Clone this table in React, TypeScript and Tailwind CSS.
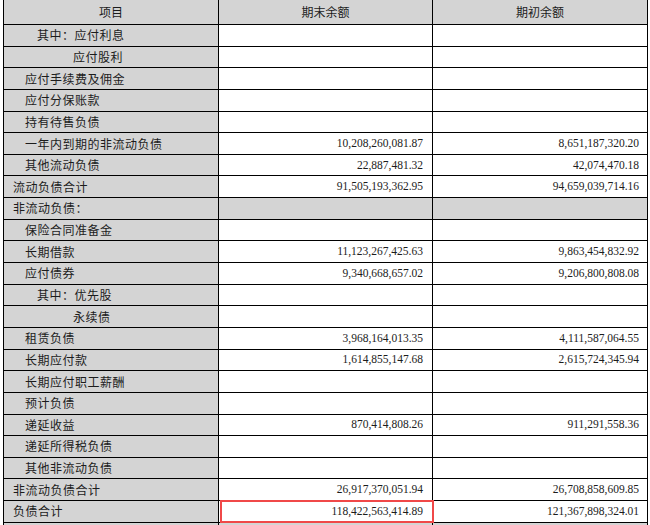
import React from 'react'

type Row = {
  label: string
  indent: number
  end?: string
  start?: string
  shaded?: boolean
  highlight?: boolean
}

const rows: Row[] = [
  { label: '其中：应付利息', indent: 1 },
  { label: '应付股利', indent: 2 },
  { label: '应付手续费及佣金', indent: 0 },
  { label: '应付分保账款', indent: 0 },
  { label: '持有待售负债', indent: 0 },
  { label: '一年内到期的非流动负债', indent: 0, end: '10,208,260,081.87', start: '8,651,187,320.20' },
  { label: '其他流动负债', indent: 0, end: '22,887,481.32', start: '42,074,470.18' },
  { label: '流动负债合计', indent: -1, end: '91,505,193,362.95', start: '94,659,039,714.16' },
  { label: '非流动负债：', indent: -1, shaded: true },
  { label: '保险合同准备金', indent: 0 },
  { label: '长期借款', indent: 0, end: '11,123,267,425.63', start: '9,863,454,832.92' },
  { label: '应付债券', indent: 0, end: '9,340,668,657.02', start: '9,206,800,808.08' },
  { label: '其中：优先股', indent: 1 },
  { label: '永续债', indent: 2 },
  { label: '租赁负债', indent: 0, end: '3,968,164,013.35', start: '4,111,587,064.55' },
  { label: '长期应付款', indent: 0, end: '1,614,855,147.68', start: '2,615,724,345.94' },
  { label: '长期应付职工薪酬', indent: 0 },
  { label: '预计负债', indent: 0 },
  { label: '递延收益', indent: 0, end: '870,414,808.26', start: '911,291,558.36' },
  { label: '递延所得税负债', indent: 0 },
  { label: '其他非流动负债', indent: 0 },
  { label: '非流动负债合计', indent: -1, end: '26,917,370,051.94', start: '26,708,858,609.85' },
  { label: '负债合计', indent: -1, end: '118,422,563,414.89', start: '121,367,898,324.01', highlight: true },
]

const cjk = "font-['Noto_Sans_CJK_SC',sans-serif]"
const num = "font-['Liberation_Serif',serif]"

function indentClass(i: number) {
  if (i === -1) return 'pl-[9px]'
  if (i === 1) return 'pl-[33px]'
  if (i === 2) return 'pl-[69px]'
  return 'pl-[21px]'
}

export default function App() {
  return (
    <div className="w-[650px] h-[525px] overflow-hidden bg-white">
      <div className="-mt-px ml-[3px] w-[645px] bg-black p-px grid grid-cols-[214px_213px_214px] grid-rows-[24px_repeat(24,20.65px)] gap-px text-[#1c1c1c]">
        <div className={`bg-[#d4d4d4] flex items-center justify-center text-[12px] ${cjk}`}>项目</div>
        <div className={`bg-[#d4d4d4] flex items-center justify-center text-[12px] ${cjk}`}>期末余额</div>
        <div className={`bg-[#d4d4d4] flex items-center justify-center text-[12px] ${cjk}`}>期初余额</div>
        {rows.map((r) => (
          <React.Fragment key={r.label}>
            <div className={`bg-[#d4d4d4] flex items-center text-[12px] tracking-[0.5px] ${cjk} ${indentClass(r.indent)}`}>
              {r.label}
            </div>
            <div className={`relative flex items-center justify-end pr-[9px] text-[11.5px] ${num} ${r.shaded ? 'bg-[#d4d4d4]' : 'bg-white'}`}>
              {r.end}
              {r.highlight && (
                <div className="absolute left-[1px] right-[-2px] top-[-1px] bottom-[-1px] border-2 border-[#f04848]" />
              )}
            </div>
            <div className={`flex items-center justify-end pr-[8px] text-[11.5px] ${num} ${r.shaded ? 'bg-[#d4d4d4]' : 'bg-white'}`}>
              {r.start}
            </div>
          </React.Fragment>
        ))}
        <div className="bg-[#d4d4d4]" />
        <div className="bg-[#d4d4d4]" />
        <div className="bg-[#d4d4d4]" />
      </div>
    </div>
  )
}
